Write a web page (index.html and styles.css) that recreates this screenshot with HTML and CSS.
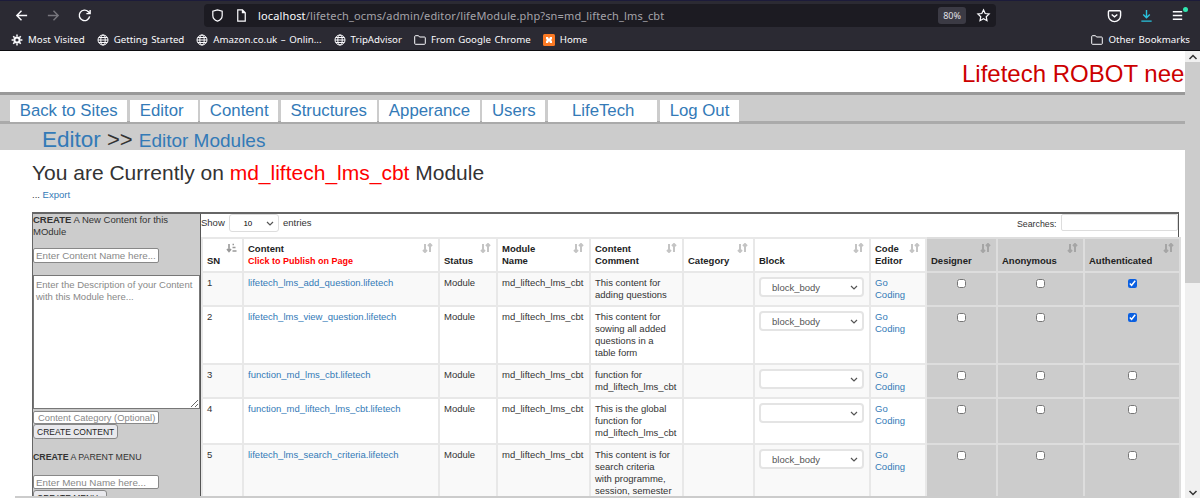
FILE: index.html
```html
<!DOCTYPE html>
<html>
  <head>
    <title>Lifetech OCMS - Editor Modules</title>
    <link rel="stylesheet" href="styles.css">
  </head>
  <body>
    <!-- browser toolbar -->
    <div class="toolbar">
      <svg class="tool-icon back-icon" viewBox="0 0 16 16"><path d="M14 8H3M8 3 3 8l5 5"/></svg>
      <svg class="tool-icon forward-icon" viewBox="0 0 16 16"><path d="M2 8h11M8 3l5 5-5 5"/></svg>
      <svg class="tool-icon reload-icon" viewBox="0 0 16 16"><path d="M13.5 9a5.6 5.6 0 1 1-1.4-5L14 6M14 2v4h-4"/></svg>
      <div class="urlbar">
        <svg class="url-icon" viewBox="0 0 16 16"><path d="M8 2 3 3.500V8c0 3 2.200 5 5 6 2.800-1 5-3 5-6V3.500z"/></svg>
        <svg class="url-icon page-icon" viewBox="0 0 16 16"><path d="M4 2h5l3 3v9H4zM9 2v3h3"/></svg>
        <span class="url-text"><b>localhost</b>/lifetech_ocms/admin/editor/lifeModule.php?sn=md_liftech_lms_cbt</span>
        <span class="zoom-badge">80%</span>
        <svg class="url-icon star-icon" viewBox="0 0 16 16"><path d="m8 2 1.800 3.900 4.200.5-3.100 2.900.8 4.200L8 11.400l-3.700 2.100.8-4.200L2 6.400l4.200-.5z"/></svg>
      </div>
      <svg class="tool-icon pocket-icon" viewBox="0 0 16 16"><path d="M2.500 3h11c.6 0 1 .4 1 1v4a6.500 6.500 0 0 1-13 0V4c0-.6.4-1 1-1zM5 7l3 2.500L11 7"/></svg>
      <svg class="tool-icon download-icon" viewBox="0 0 16 16"><path d="M8 2v8M4.500 7 8 10.500 11.500 7M2.500 14h11"/></svg>
      <div class="menu-icon">
        <svg class="tool-icon" viewBox="0 0 16 16"><path d="M3 4h10M3 8h10M3 12h10"/></svg>
        <span class="menu-dot"></span>
      </div>
    </div>

    <!-- bookmarks -->
    <div class="bookmarks">
      <span class="bookmark">
        <svg class="bm-icon gear-icon" viewBox="0 0 12 12"><circle cx="6" cy="6" r="2.600"/><path d="M6 .6v2M6 9.400v2M.6 6h2M9.400 6h2M2.200 2.200l1.400 1.400M8.400 8.400l1.400 1.400M2.200 9.800l1.400-1.400M8.400 3.600l1.400-1.400"/></svg>
        Most Visited
      </span>
      <span class="bookmark">
        <svg class="bm-icon" viewBox="0 0 12 12"><circle cx="6" cy="6" r="5"/><ellipse cx="6" cy="6" rx="2.200" ry="5"/><path d="M1 6h10M1.800 3.500h8.400M1.800 8.500h8.400"/></svg>
        Getting Started
      </span>
      <span class="bookmark">
        <svg class="bm-icon" viewBox="0 0 12 12"><circle cx="6" cy="6" r="5"/><ellipse cx="6" cy="6" rx="2.200" ry="5"/><path d="M1 6h10M1.800 3.500h8.400M1.800 8.500h8.400"/></svg>
        Amazon.co.uk – Onlin...
      </span>
      <span class="bookmark">
        <svg class="bm-icon" viewBox="0 0 12 12"><circle cx="6" cy="6" r="5"/><ellipse cx="6" cy="6" rx="2.200" ry="5"/><path d="M1 6h10M1.800 3.500h8.400M1.800 8.500h8.400"/></svg>
        TripAdvisor
      </span>
      <span class="bookmark">
        <svg class="bm-icon" viewBox="0 0 12 12"><path d="M.7 2.500c0-.5.3-.8.8-.8h3l1 1.300h5c.5 0 .8.300.8.800v5.700c0 .5-.3.800-.8.800h-9c-.5 0-.8-.3-.8-.8z"/></svg>
        From Google Chrome
      </span>
      <span class="bookmark">
        <svg class="bm-icon xampp-icon" viewBox="0 0 12 12"><rect width="12" height="12" rx="1.500"/><path d="M3 3h2l1 2 1-2h2v2L8 6l1 1v2H7L6 7 5 9H3V7l1-1-1-1z"/></svg>
        Home
      </span>
      <span class="bookmark bookmark-other">
        <svg class="bm-icon" viewBox="0 0 12 12"><path d="M.7 2.500c0-.5.3-.8.8-.8h3l1 1.300h5c.5 0 .8.300.8.800v5.700c0 .5-.3.800-.8.800h-9c-.5 0-.8-.3-.8-.8z"/></svg>
        Other Bookmarks
      </span>
    </div>

    <div class="viewport">
      <div class="page">
        <div class="robot-banner">Lifetech ROBOT needs your attention</div>

        <div class="main-nav">
          <a class="nav-btn">Back to Sites</a>
          <a class="nav-btn nav-editor">Editor</a>
          <a class="nav-btn">Content</a>
          <a class="nav-btn">Structures</a>
          <a class="nav-btn">Apperance</a>
          <a class="nav-btn">Users</a>
          <a class="nav-btn nav-lifetech">LifeTech</a>
          <a class="nav-btn">Log Out</a>
        </div>

        <div class="crumbs">
          <a class="crumb-main">Editor</a> &gt;&gt; <a class="crumb-sub">Editor Modules</a>
        </div>

        <h1 class="module-title">You are Currently on <span class="module-name">md_liftech_lms_cbt</span> Module</h1>
        <p class="export-line">... <a>Export</a></p>

        <div class="workspace">
          <div class="side-panel">
            <p class="side-text"><b>CREATE</b> A New Content for this MOdule</p>
            <input class="side-input first-input" type="text" placeholder="Enter Content Name here...">
            <textarea class="side-area" placeholder="Enter the Description of your Content with this Module here..."></textarea>
            <input class="side-input category-input" type="text" placeholder="Content Category (Optional)">
            <button class="side-btn">CREATE CONTENT</button>
            <p class="side-text parent-text"><b>CREATE</b> A PARENT MENU</p>
            <input class="side-input menu-input" type="text" placeholder="Enter Menu Name here...">
            <button class="side-btn menu-btn">CREATE MENUs</button>
          </div>

          <div class="table-panel">
            <div class="table-tools">
              <label>Show
                <select class="length-select"><option>10</option></select>
                entries</label>
              <label class="search-label">Searches: <input class="search-input" type="text"></label>
            </div>

            <table class="modules">
              <colgroup>
                <col class="c-sn"><col class="c-content"><col class="c-status"><col class="c-module">
                <col class="c-comment"><col class="c-category"><col class="c-block"><col class="c-code">
                <col class="c-designer"><col class="c-anon"><col class="c-auth">
              </colgroup>
              <thead>
                <tr>
                  <th>SN<svg class="sort sort-on" viewBox="0 0 11 10"><path d="M3 1v7M1 6l2 2.500L5 6M6.500 1.500h1.500M6.500 4.500h3M6.500 8h4"/></svg></th>
                  <th>Content<br><span class="publish-note">Click to Publish on Page</span><svg class="sort" viewBox="0 0 11 10"><path d="M3 1v8M1 7l2 2 2-2M8 9V1M6 3l2-2 2 2"/></svg></th>
                  <th>Status<svg class="sort" viewBox="0 0 11 10"><path d="M3 1v8M1 7l2 2 2-2M8 9V1M6 3l2-2 2 2"/></svg></th>
                  <th>Module<br>Name<svg class="sort" viewBox="0 0 11 10"><path d="M3 1v8M1 7l2 2 2-2M8 9V1M6 3l2-2 2 2"/></svg></th>
                  <th>Content<br>Comment<svg class="sort" viewBox="0 0 11 10"><path d="M3 1v8M1 7l2 2 2-2M8 9V1M6 3l2-2 2 2"/></svg></th>
                  <th>Category<svg class="sort" viewBox="0 0 11 10"><path d="M3 1v8M1 7l2 2 2-2M8 9V1M6 3l2-2 2 2"/></svg></th>
                  <th>Block<svg class="sort" viewBox="0 0 11 10"><path d="M3 1v8M1 7l2 2 2-2M8 9V1M6 3l2-2 2 2"/></svg></th>
                  <th>Code<br>Editor<svg class="sort" viewBox="0 0 11 10"><path d="M3 1v8M1 7l2 2 2-2M8 9V1M6 3l2-2 2 2"/></svg></th>
                  <th class="role">Designer<svg class="sort" viewBox="0 0 11 10"><path d="M3 1v8M1 7l2 2 2-2M8 9V1M6 3l2-2 2 2"/></svg></th>
                  <th class="role">Anonymous<svg class="sort" viewBox="0 0 11 10"><path d="M3 1v8M1 7l2 2 2-2M8 9V1M6 3l2-2 2 2"/></svg></th>
                  <th class="role">Authenticated<svg class="sort" viewBox="0 0 11 10"><path d="M3 1v8M1 7l2 2 2-2M8 9V1M6 3l2-2 2 2"/></svg></th>
                </tr>
              </thead>
              <tbody>
                <tr>
                  <td>1</td>
                  <td><a>lifetech_lms_add_question.lifetech</a></td>
                  <td>Module</td>
                  <td>md_liftech_lms_cbt</td>
                  <td class="comment">This content for adding questions</td>
                  <td></td>
                  <td><select class="block-select"><option>block_body</option></select></td>
                  <td><a>Go<br>Coding</a></td>
                  <td class="role"><input type="checkbox"></td>
                  <td class="role"><input type="checkbox"></td>
                  <td class="role"><input type="checkbox" checked></td>
                </tr>
                <tr>
                  <td>2</td>
                  <td><a>lifetech_lms_view_question.lifetech</a></td>
                  <td>Module</td>
                  <td>md_liftech_lms_cbt</td>
                  <td class="comment">This content for sowing all added questions in a table form</td>
                  <td></td>
                  <td><select class="block-select"><option>block_body</option></select></td>
                  <td><a>Go<br>Coding</a></td>
                  <td class="role"><input type="checkbox"></td>
                  <td class="role"><input type="checkbox"></td>
                  <td class="role"><input type="checkbox" checked></td>
                </tr>
                <tr>
                  <td>3</td>
                  <td><a>function_md_lms_cbt.lifetech</a></td>
                  <td>Module</td>
                  <td>md_liftech_lms_cbt</td>
                  <td class="comment">function for md_liftech_lms_cbt</td>
                  <td></td>
                  <td><select class="block-select"><option></option></select></td>
                  <td><a>Go<br>Coding</a></td>
                  <td class="role"><input type="checkbox"></td>
                  <td class="role"><input type="checkbox"></td>
                  <td class="role"><input type="checkbox"></td>
                </tr>
                <tr>
                  <td>4</td>
                  <td><a>function_md_liftech_lms_cbt.lifetech</a></td>
                  <td>Module</td>
                  <td>md_liftech_lms_cbt</td>
                  <td class="comment">This is the global function for md_liftech_lms_cbt</td>
                  <td></td>
                  <td><select class="block-select"><option></option></select></td>
                  <td><a>Go<br>Coding</a></td>
                  <td class="role"><input type="checkbox"></td>
                  <td class="role"><input type="checkbox"></td>
                  <td class="role"><input type="checkbox"></td>
                </tr>
                <tr>
                  <td>5</td>
                  <td><a>lifetech_lms_search_criteria.lifetech</a></td>
                  <td>Module</td>
                  <td>md_liftech_lms_cbt</td>
                  <td class="comment">This content is for search criteria with programme, session, semester and level</td>
                  <td></td>
                  <td><select class="block-select"><option>block_body</option></select></td>
                  <td><a>Go<br>Coding</a></td>
                  <td class="role"><input type="checkbox"></td>
                  <td class="role"><input type="checkbox"></td>
                  <td class="role"><input type="checkbox"></td>
                </tr>
              </tbody>
            </table>
          </div>
        </div>
      </div>

      <div class="scrollbar">
        <svg class="scroll-arrow arrow-up" viewBox="0 0 10 6"><path d="M1.500 5 5 1.500 8.500 5"/></svg>
        <div class="scroll-thumb"></div>
        <svg class="scroll-arrow arrow-down" viewBox="0 0 10 6"><path d="M1.500 1 5 4.500 8.500 1"/></svg>
      </div>
    </div>
    <div class="h-scrollbar"></div>
  </body>
</html>
```

FILE: styles.css
```css
html, body {
  margin: 0;
  height: 500px;
  overflow: hidden;
  background: white;
  font-family: "Liberation Sans", Arial, sans-serif;
}

/* browser chrome */
.toolbar {
  height: 29px;
  box-sizing: border-box;
  padding-top: 3px;
  display: flex;
  align-items: flex-start;
  background: #2b2a33;
  border-top: 1px solid #1c1b3a;
}

.tool-icon {
  width: 15px;
  height: 15px;
  margin-top: 4px;
  fill: none;
  stroke: #fbfbfe;
  stroke-width: 1.500;
}

.back-icon {
  margin-left: 14px;
}

.forward-icon {
  margin-left: 17px;
  stroke: #77767d;
}

.reload-icon {
  margin-left: 16px;
}

.urlbar {
  width: 792px;
  height: 23px;
  padding: 0 5px 0 6px;
  box-sizing: border-box;
  display: flex;
  align-items: center;
  margin-left: 112px;
  background: #1c1b22;
  border-radius: 4px;
  color: #a5a4aa;
  font-family: "Noto Sans", sans-serif;
  font-size: 11px;
}

.url-icon {
  width: 15px;
  height: 15px;
  flex: none;
  fill: none;
  stroke: #fbfbfe;
  stroke-width: 1.300;
}

.page-icon {
  margin-left: 9px;
}

.url-text {
  margin-left: 9px;
  letter-spacing: 0.14px;
}

.url-text b {
  color: #fbfbfe;
  font-weight: normal;
}

.zoom-badge {
  margin-left: auto;
  padding: 2px 5px;
  background: #3b3a44;
  border-radius: 3px;
  font-size: 9px;
  color: #e0e0e6;
}

.star-icon {
  margin-left: 10px;
}

.pocket-icon {
  margin-left: 111px;
}

.download-icon {
  margin-left: 17px;
  stroke: #2ac3de;
}

.menu-icon {
  margin-left: 16px;
  position: relative;
}

.menu-dot {
  position: absolute;
  top: 3px;
  right: -3px;
  width: 5px;
  height: 5px;
  border-radius: 50%;
  background: #30e6b0;
}

.bookmarks {
  height: 22px;
  box-sizing: border-box;
  padding: 0 10px 0 11px;
  display: flex;
  align-items: center;
  gap: 12px;
  background: #2b2a33;
  border-bottom: 1px solid #0c0c10;
  color: #fbfbfe;
  font-family: "Noto Sans", sans-serif;
  font-size: 9.700px;
  word-spacing: 1px;
}

.bookmark {
  display: flex;
  align-items: center;
  gap: 5px;
  white-space: nowrap;
}

.bookmark-other {
  margin-left: auto;
}

.bm-icon {
  width: 12px;
  height: 12px;
  fill: none;
  stroke: #fbfbfe;
}

.gear-icon circle {
  fill: none;
  stroke-width: 2;
}

.gear-icon path {
  stroke-width: 1.500;
}

.xampp-icon {
  stroke: none;
  fill: #fb7a24;
}

.xampp-icon path {
  fill: #fff;
}

/* page area */
.viewport {
  display: flex;
  height: 447px;
}

.page {
  width: 1185px;
  flex: none;
  overflow: hidden;
}

.robot-banner {
  height: 41px;
  box-sizing: border-box;
  padding: 10px 0 0 962px;
  white-space: nowrap;
  overflow: hidden;
  color: #c00;
  font-size: 24px;
  line-height: 26px;
}

.main-nav {
  height: 32px;
  box-sizing: border-box;
  padding: 5px 0 0 10px;
  display: flex;
  gap: 2.500px;
  background: #ccc;
  border-top: 3px solid #999;
  border-bottom: 3px solid #aaa;
}

.nav-btn {
  height: 22px;
  padding: 0 9.700px;
  background: white;
  color: #337ab7;
  font-size: 16.800px;
  line-height: 22px;
}

.nav-editor {
  padding: 0 14px 0 10px;
}

.nav-lifetech {
  padding: 0 23px 0 24px;
}

.crumbs {
  height: 26px;
  box-sizing: border-box;
  padding-left: 42px;
  background: #ccc;
  color: #333;
  font-size: 22px;
  line-height: 32px;
  white-space: nowrap;
}

.crumb-main {
  color: #337ab7;
  font-size: 22.500px;
}

.crumb-sub {
  color: #337ab7;
  font-size: 19px;
}

.module-title {
  margin: 11px 0 0 32px;
  font-size: 21px;
  font-weight: normal;
  line-height: 24px;
  color: #333;
}

.module-name {
  color: red;
}

.export-line {
  margin: 4px 0 0 32px;
  font-size: 9.500px;
  line-height: 12px;
  color: #333;
}

.export-line a {
  color: #337ab7;
}

/* left form + table */
.workspace {
  width: 1147px;
  height: 300px;
  margin: 11px 0 0 32px;
  box-sizing: border-box;
  display: flex;
  border-top: 2px solid #666;
  border-left: 1px solid #666;
  border-right: 1px solid #555;
  font-size: 9.500px;
  color: #333;
}

.side-panel {
  width: 168px;
  flex: none;
  box-sizing: border-box;
  background: #ccc;
  border-right: 1px solid #555;
}

.side-text {
  margin: 0;
  line-height: 12px;
}

.side-input {
  display: block;
  width: 126px;
  height: 15px;
  box-sizing: border-box;
  padding: 0 2px;
  border: 1px solid #888;
  border-radius: 2px;
  background: white;
  font: 9.800px "Liberation Sans", sans-serif;
}

.side-input::placeholder,
.side-area::placeholder {
  color: #888;
}

.first-input {
  margin-top: 10px;
}

.side-area {
  display: block;
  width: 167px;
  height: 134px;
  margin-top: 12px;
  box-sizing: border-box;
  padding: 3px 2px;
  border: 1px solid #777;
  border-radius: 0;
  font: 9.500px/12px "Liberation Sans", sans-serif;
}

.category-input {
  margin-top: 2px;
  height: 13px;
  padding-left: 4px;
  font-size: 9.400px;
}

.menu-input {
  height: 14px;
}

.side-btn {
  display: block;
  height: 15px;
  padding: 0 3px;
  border: 1px solid #888;
  border-radius: 3px;
  background: #e9e9ed;
  color: #222;
  font: 8.500px "Liberation Sans", sans-serif;
}

.menu-btn {
  margin-top: 1px;
}

.parent-text {
  margin-top: 12px;
  margin-bottom: 12px;
  font-size: 8.800px;
}

.table-panel {
  flex: 1;
  min-width: 0;
}

.table-tools {
  height: 23px;
  box-sizing: border-box;
  display: flex;
  justify-content: space-between;
  line-height: 14px;
}

.length-select,
.block-select {
  appearance: none;
  background: white url("data:image/svg+xml,%3Csvg xmlns='http://www.w3.org/2000/svg' width='8' height='5'%3E%3Cpath d='M1 1l3 3 3-3' fill='none' stroke='%23555' stroke-width='1.200'/%3E%3C/svg%3E") no-repeat right 4px center;
}

.length-select {
  width: 50px;
  height: 18px;
  box-sizing: border-box;
  margin: 0 1px 0 2px;
  padding-left: 13px;
  border: 1px solid #ddd;
  border-radius: 3px;
  font: 8px "Liberation Sans", sans-serif;
}

.search-label {
  font-size: 8.800px;
}

.search-input {
  width: 117px;
  height: 17px;
  box-sizing: border-box;
  margin: 0 0 0 2px;
  border: 1px solid #ddd;
  border-radius: 2px;
}

.modules {
  width: 978px;
  table-layout: fixed;
  border-collapse: collapse;
  border-top: 1px solid #e6e6e6;
  line-height: 12px;
}

.c-sn { width: 41px; }
.c-content { width: 196px; }
.c-status { width: 58px; }
.c-module { width: 93px; }
.c-comment { width: 93px; }
.c-category { width: 71px; }
.c-block { width: 116px; }
.c-code { width: 56px; }
.c-designer { width: 71px; }
.c-anon { width: 87px; }
.c-auth { width: 96px; }

.modules th,
.modules td {
  padding: 4px;
  border: 2px solid #e8e8e8;
  text-align: left;
  vertical-align: top;
  overflow: hidden;
}

.modules th {
  position: relative;
  vertical-align: bottom;
  color: #222;
}

.modules .comment {
  padding-right: 9px;
}

.modules a {
  color: #337ab7;
}

.modules tbody tr:nth-child(odd) td {
  background: #f9f9f9;
}

.modules .role,
.modules tbody tr:nth-child(odd) td.role {
  background: #ccc;
  border-color: #ddd;
  text-align: center;
}

.modules th.role {
  text-align: left;
}

.publish-note {
  color: red;
  font-size: 9px;
}

.sort {
  position: absolute;
  top: 4px;
  right: 5px;
  width: 11px;
  height: 10px;
  fill: none;
  stroke: #c4c4c4;
  stroke-width: 2;
}

.sort-on {
  stroke: #999;
  stroke-width: 1.600;
}

.role .sort {
  stroke: #a5a5a5;
}

.block-select {
  display: block;
  width: 105px;
  height: 20px;
  box-sizing: border-box;
  padding-left: 11px;
  border: 2px solid #e4e4e4;
  border-radius: 4px;
  color: #555;
  font: 9.500px "Liberation Sans", sans-serif;
}

.modules input[type="checkbox"] {
  width: 9px;
  height: 9px;
  margin: 2px 0 0;
  accent-color: #0a5fe0;
}

/* fake scrollbars */
.scrollbar {
  width: 15px;
  flex: none;
  display: flex;
  flex-direction: column;
  align-items: center;
  background: #f0f0f0;
}

.scroll-arrow {
  width: 10px;
  height: 6px;
  flex: none;
  fill: none;
  stroke: #333;
  stroke-width: 1.500;
}

.arrow-up {
  margin: 3px 0 2px;
}

.arrow-down {
  margin-bottom: 2px;
}

.scroll-thumb {
  width: 15px;
  height: 221px;
  background: #ccc;
  margin-bottom: auto;
}

.h-scrollbar {
  width: 1150px;
  height: 2px;
  margin: -2px 0 0 15px;
  position: relative;
  background: #ccc;
}
```
